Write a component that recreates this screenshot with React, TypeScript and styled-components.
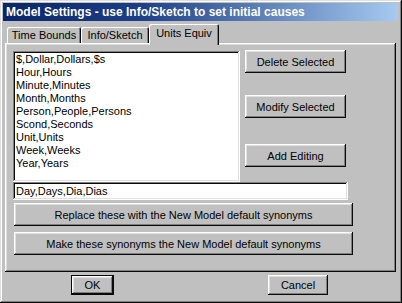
import React from "react";
import styled, { createGlobalStyle } from "styled-components";

const GlobalStyle = createGlobalStyle`
  html, body {
    margin: 0;
    padding: 0;
    background: #c0c0c0;
  }
  body {
    font-family: "Liberation Sans", Arial, sans-serif;
    font-size: 11px;
    color: #000;
  }
`;

const raised = `
  box-shadow: inset -1px -1px #0a0a0a, inset 1px 1px #ffffff,
    inset -2px -2px #808080, inset 2px 2px #dfdfdf;
`;

const sunken = `
  box-shadow: inset -1px -1px #ffffff, inset 1px 1px #808080,
    inset -2px -2px #dfdfdf, inset 2px 2px #0a0a0a;
`;

const Window = styled.div`
  width: 402px;
  height: 303px;
  box-sizing: border-box;
  padding: 3px;
  background: #c0c0c0;
  box-shadow: inset -1px -1px #0a0a0a, inset 1px 1px #dfdfdf,
    inset -2px -2px #808080, inset 2px 2px #ffffff;
  display: flex;
  flex-direction: column;
`;

const TitleBar = styled.div`
  height: 18px;
  margin-right: 1px;
  padding-left: 3px;
  display: flex;
  align-items: center;
  background: linear-gradient(90deg, #0a246a 0%, #1e3f88 35%, #a6caf0 100%);
  color: #fff;
  font-weight: bold;
  font-size: 12px;
  white-space: nowrap;
`;

const TabStrip = styled.div`
  display: flex;
  align-items: flex-end;
  height: 19px;
  margin-top: 3px;
  padding-left: 4px;
  position: relative;
  z-index: 1;
`;

const Tab = styled.div<{ $w: number; $active?: boolean }>`
  width: ${(p) => p.$w}px;
  height: ${(p) => (p.$active ? 21 : 16)}px;
  margin-bottom: ${(p) => (p.$active ? -2 : 0)}px;
  box-sizing: border-box;
  display: flex;
  align-items: center;
  justify-content: center;
  padding-bottom: ${(p) => (p.$active ? 3 : 0)}px;
  background: #c0c0c0;
  border-top-left-radius: 2px;
  border-top-right-radius: 2px;
  box-shadow: inset 1px 1px #ffffff, inset -1px 0 #0a0a0a,
    inset -2px 0 #808080;
  white-space: nowrap;
`;

const Panel = styled.div`
  margin-left: 2px;
  width: 391px;
  height: 229px;
  box-sizing: border-box;
  padding: 7px 0 0 8px;
  ${raised}
`;

const TopRow = styled.div`
  display: flex;
  align-items: flex-start;
`;

const ListBox = styled.div`
  width: 227px;
  height: 131px;
  margin-top: 1px;
  box-sizing: border-box;
  padding: 2px 0 0 3px;
  background: #fff;
  ${sunken}
`;

const ListItem = styled.div`
  height: 13px;
  line-height: 13px;
  white-space: nowrap;
`;

const SideButtons = styled.div`
  display: flex;
  flex-direction: column;
  margin-left: 5px;
`;

const Button = styled.div<{ $w: number; $h?: number; $top?: number; $default?: boolean }>`
  width: ${(p) => p.$w}px;
  height: ${(p) => p.$h ?? 23}px;
  margin-top: ${(p) => p.$top ?? 0}px;
  box-sizing: border-box;
  display: flex;
  align-items: center;
  justify-content: center;
  background: #c0c0c0;
  white-space: nowrap;
  ${(p) =>
    p.$default
      ? `box-shadow: inset -1px -1px #0a0a0a, inset 1px 1px #0a0a0a,
    inset -2px -2px #0a0a0a, inset 2px 2px #ffffff,
    inset -3px -3px #808080, inset 3px 3px #dfdfdf;`
      : raised}
`;

const TextField = styled.div`
  width: 335px;
  height: 18px;
  box-sizing: border-box;
  padding: 0 0 0 3px;
  display: flex;
  align-items: center;
  background: #fff;
  ${sunken}
`;

const WideButtons = styled.div`
  display: flex;
  flex-direction: column;
  margin-left: 1px;
`;

const Footer = styled.div`
  display: flex;
  margin-top: 3px;
  padding-left: 68px;
  gap: 154px;
`;

const units = [
  "$,Dollar,Dollars,$s",
  "Hour,Hours",
  "Minute,Minutes",
  "Month,Months",
  "Person,People,Persons",
  "Scond,Seconds",
  "Unit,Units",
  "Week,Weeks",
  "Year,Years",
];

export default function App() {
  return (
    <>
      <GlobalStyle />
      <Window>
        <TitleBar>Model Settings - use Info/Sketch to set initial causes</TitleBar>
        <TabStrip>
          <Tab $w={74}>Time Bounds</Tab>
          <Tab $w={68}>Info/Sketch</Tab>
          <Tab $w={70} $active>
            Units Equiv
          </Tab>
        </TabStrip>
        <Panel>
          <TopRow>
            <ListBox>
              {units.map((u) => (
                <ListItem key={u}>{u}</ListItem>
              ))}
            </ListBox>
            <SideButtons>
              <Button $w={101}>Delete Selected</Button>
              <Button $w={101} $top={22}>
                Modify Selected
              </Button>
              <Button $w={101} $top={26}>
                Add Editing
              </Button>
            </SideButtons>
          </TopRow>
          <TextField>Day,Days,Dia,Dias</TextField>
          <WideButtons>
            <Button $w={339} $top={3}>
              Replace these with the New Model default synonyms
            </Button>
            <Button $w={339} $top={6}>
              Make these synonyms the New Model default synonyms
            </Button>
          </WideButtons>
        </Panel>
        <Footer>
          <Button $w={43} $h={20} $default>
            OK
          </Button>
          <Button $w={60} $h={20}>
            Cancel
          </Button>
        </Footer>
      </Window>
    </>
  );
}
